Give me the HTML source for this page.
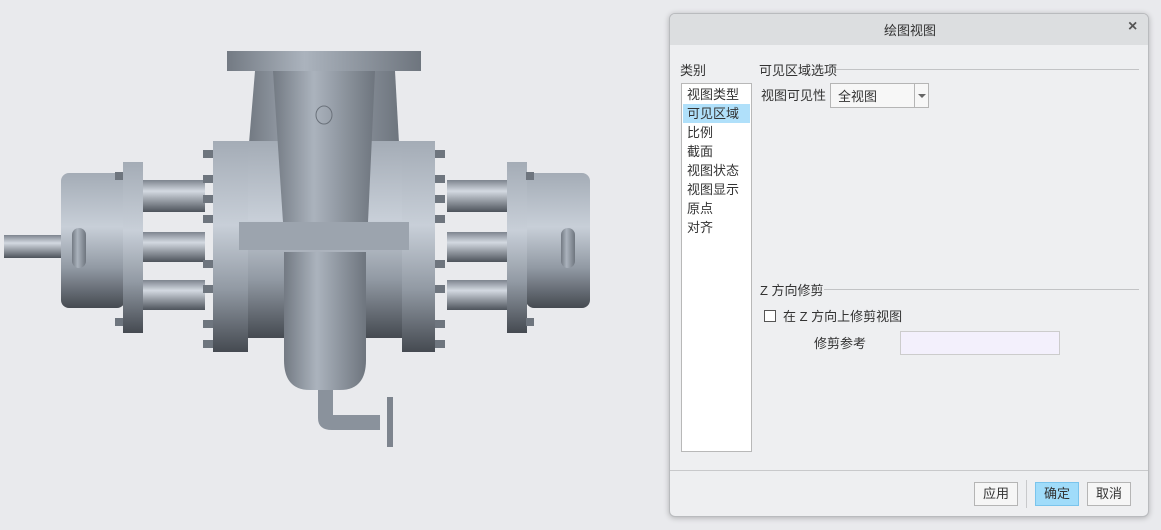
<!DOCTYPE html>
<html><head><meta charset="utf-8"><style>
*{margin:0;padding:0;box-sizing:border-box}
body{width:1161px;height:530px;background:#e9eaed;position:relative;overflow:hidden;font-family:"Liberation Sans","Noto Sans CJK SC",sans-serif;font-size:13px;color:#333}
.a{position:absolute;white-space:nowrap}
#dlg{position:absolute;left:669px;top:13px;width:480px;height:504px;background:#eeeff1;border:1px solid #b9bbbe;border-radius:6px;box-shadow:0 1px 6px rgba(0,0,0,.25);overflow:hidden}
.btn{position:absolute;top:468px;height:24px;width:44px;border:1px solid #b5b5b5;background:#f6f6f6;text-align:center;line-height:21px}
</style></head><body>
<svg class="a" style="left:0;top:0" width="640" height="530">
<defs>
<linearGradient id="g" x1="0" y1="0" x2="0" y2="1">
<stop offset="0" stop-color="#a4acb6"/><stop offset=".4" stop-color="#c8cfd8"/><stop offset=".7" stop-color="#929aa4"/><stop offset="1" stop-color="#454a51"/></linearGradient>
<linearGradient id="c" x1="0" y1="0" x2="0" y2="1">
<stop offset="0" stop-color="#7d848e"/><stop offset=".35" stop-color="#d3d9e1"/><stop offset="1" stop-color="#4d535b"/></linearGradient>
<linearGradient id="h" x1="0" y1="0" x2="1" y2="0">
<stop offset="0" stop-color="#737a83"/><stop offset=".4" stop-color="#abb3bd"/><stop offset="1" stop-color="#6e757e"/></linearGradient>
</defs>
<rect x="4" y="235" width="58" height="23" fill="url(#c)"/>
<rect x="61" y="173" width="64" height="135" rx="8" fill="url(#g)"/>
<rect x="143" y="180" width="62" height="32" fill="url(#c)"/>
<rect x="143" y="232" width="62" height="30" fill="url(#c)"/>
<rect x="143" y="280" width="62" height="30" fill="url(#c)"/>
<rect x="123" y="162" width="20" height="171" fill="url(#g)"/>
<rect x="72" y="228" width="14" height="40" rx="7" fill="url(#h)"/>
<rect x="447" y="180" width="62" height="32" fill="url(#c)"/>
<rect x="447" y="232" width="62" height="30" fill="url(#c)"/>
<rect x="447" y="280" width="62" height="30" fill="url(#c)"/>
<rect x="526" y="173" width="64" height="135" rx="8" fill="url(#g)"/>
<rect x="507" y="162" width="20" height="171" fill="url(#g)"/>
<rect x="561" y="228" width="14" height="40" rx="7" fill="url(#h)"/>
<path d="M255 71 L395 71 L399 143 L249 143 Z" fill="url(#h)"/>
<rect x="227" y="51" width="194" height="20" fill="url(#h)"/>
<rect x="248" y="141" width="154" height="197" fill="url(#g)"/>
<rect x="213" y="141" width="35" height="211" fill="url(#g)"/>
<rect x="402" y="141" width="33" height="211" fill="url(#g)"/>
<rect x="239" y="222" width="170" height="28" fill="#9ca4ae"/>
<path d="M273 71 L375 71 L368 222 L283 222 Z" fill="url(#h)"/>
<ellipse cx="324" cy="115" rx="8" ry="9" fill="none" stroke="#6a717a"/>
<path d="M284 252 L366 252 L366 360 Q366 390 340 390 L310 390 Q284 390 284 360 Z" fill="url(#h)"/>
<path d="M318 390 L318 418 Q318 430 332 430 L380 430 L380 415 L333 415 L333 390 Z" fill="#8a929c"/>
<rect x="387" y="397" width="6" height="50" fill="#7d848e"/>
<g fill="#6e757e">
<rect x="203" y="150" width="10" height="8"/><rect x="203" y="175" width="10" height="8"/><rect x="203" y="195" width="10" height="8"/><rect x="203" y="215" width="10" height="8"/><rect x="203" y="260" width="10" height="8"/><rect x="203" y="285" width="10" height="8"/><rect x="203" y="320" width="10" height="8"/><rect x="203" y="340" width="10" height="8"/>
<rect x="435" y="150" width="10" height="8"/><rect x="435" y="175" width="10" height="8"/><rect x="435" y="195" width="10" height="8"/><rect x="435" y="215" width="10" height="8"/><rect x="435" y="260" width="10" height="8"/><rect x="435" y="285" width="10" height="8"/><rect x="435" y="320" width="10" height="8"/><rect x="435" y="340" width="10" height="8"/>
<rect x="115" y="172" width="8" height="8"/><rect x="115" y="318" width="8" height="8"/><rect x="526" y="172" width="8" height="8"/><rect x="526" y="318" width="8" height="8"/>
</g>
</svg>
<div id="dlg">
<div class="a" style="left:0;top:0;width:480px;height:31px;background:#dcdee0"></div>
<div class="a" style="left:0;top:6px;width:480px;text-align:center;color:#333">绘图视图</div>
<div class="a" style="left:458px;top:4px;font-weight:bold;font-size:16px;color:#555">×</div>
<div class="a" style="left:10px;top:46px">类别</div>
<div class="a" style="left:11px;top:69px;width:71px;height:369px;background:#fff;border:1px solid #b8b8b8"></div>
<div class="a" style="left:13px;top:90px;width:67px;height:19px;background:#b0e0fa"></div>
<div class="a" style="left:17px;top:71px;line-height:19px">视图类型<br>可见区域<br>比例<br>截面<br>视图状态<br>视图显示<br>原点<br>对齐</div>
<div class="a" style="left:89px;top:46px">可见区域选项</div>
<div class="a" style="left:166px;top:55px;width:303px;height:1px;background:#c2c3c5"></div>
<div class="a" style="left:91px;top:71px">视图可见性</div>
<div class="a" style="left:160px;top:69px;width:99px;height:25px;background:#f7f7f7;border:1px solid #b5b5b5"></div>
<div class="a" style="left:244px;top:69px;width:1px;height:25px;background:#b5b5b5"></div>
<div class="a" style="left:168px;top:72px">全视图</div>
<div class="a" style="left:248px;top:80px;border:4px solid transparent;border-top:4px solid #666"></div>
<div class="a" style="left:90px;top:266px">Z 方向修剪</div>
<div class="a" style="left:154px;top:275px;width:315px;height:1px;background:#c2c3c5"></div>
<div class="a" style="left:94px;top:296px;width:12px;height:12px;border:1px solid #555;background:#fff"></div>
<div class="a" style="left:113px;top:292px">在 Z 方向上修剪视图</div>
<div class="a" style="left:144px;top:319px">修剪参考</div>
<div class="a" style="left:230px;top:317px;width:160px;height:24px;background:#f3f0fc;border:1px solid #ccc"></div>
<div class="a" style="left:0;top:456px;width:480px;height:1px;background:#c8c9cb"></div>
<div class="btn" style="left:304px">应用</div>
<div class="a" style="left:356px;top:466px;width:1px;height:28px;background:#c8c9cb"></div>
<div class="btn" style="left:365px;background:#a0dcfa;border-color:#7ac4ec">确定</div>
<div class="btn" style="left:417px">取消</div>
</div>
</body></html>
